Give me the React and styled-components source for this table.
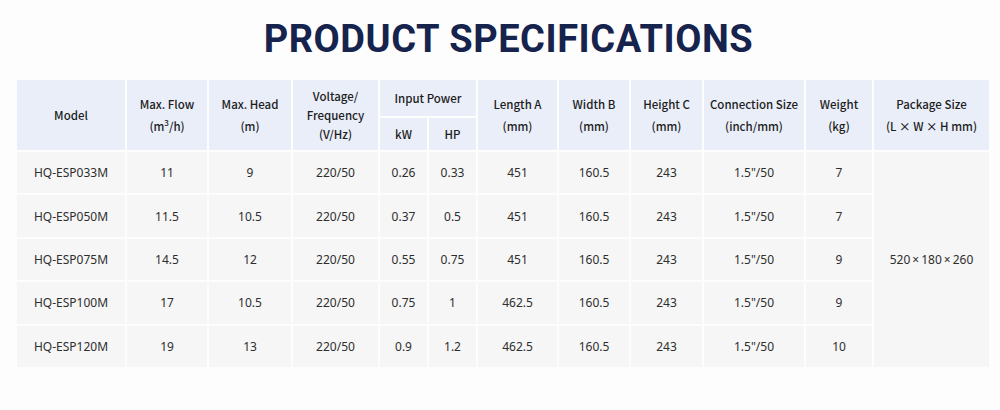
import styled, { createGlobalStyle } from "styled-components";

const GlobalStyle = createGlobalStyle`
  body {
    margin: 0;
    background: #fdfdfd;
    font-family: "Noto Sans", "Liberation Sans", sans-serif;
  }
`;

const Page = styled.div`
  width: 1000px;
  height: 410px;
  padding: 14px 11px 0 15px;
  box-sizing: border-box;
`;

const Title = styled.h1`
  margin: 3px 0 16px;
  height: 45px;
  text-align: center;
  font: 700 38px/45px "Roboto", "Liberation Sans", sans-serif;
  color: #15234d;
  letter-spacing: 0.55px;
  padding-left: 13px;
`;

const Table = styled.table`
  width: 974px;
  table-layout: fixed;
  border-collapse: collapse;
  font-size: 12px;
  color: #333;
`;

const Head = styled.th`
  background: #e9eef9;
  border: 2px solid #fdfdfd;
  font-family: "Noto Sans CJK SC", "Noto Sans", sans-serif;
  font-weight: 500;
  font-size: 11.5px;
  color: #1d1d1d;
  line-height: ${(p) => p.$lh || 22}px;
  padding: 0;
  height: ${(p) => p.$h || 32}px;
  vertical-align: middle;
`;

const Sup = styled.sup`
  font-size: 8px;
  line-height: 0;
`;

const Cell = styled.td`
  background: #f6f6f6;
  border: 2px solid #fdfdfd;
  text-align: center;
  padding: 0;
  height: 41.4px;
  color: #2e2e2e;
`;

const widths = [110, 82, 84, 87, 49, 49, 81, 72, 73, 102, 68, 117];

const rows = [
  ["HQ-ESP033M", "11", "9", "220/50", "0.26", "0.33", "451", "160.5", "243", "1.5\"/50", "7"],
  ["HQ-ESP050M", "11.5", "10.5", "220/50", "0.37", "0.5", "451", "160.5", "243", "1.5\"/50", "7"],
  ["HQ-ESP075M", "14.5", "12", "220/50", "0.55", "0.75", "451", "160.5", "243", "1.5\"/50", "9"],
  ["HQ-ESP100M", "17", "10.5", "220/50", "0.75", "1", "462.5", "160.5", "243", "1.5\"/50", "9"],
  ["HQ-ESP120M", "19", "13", "220/50", "0.9", "1.2", "462.5", "160.5", "243", "1.5\"/50", "10"],
];

export default function App() {
  return (
    <Page>
      <GlobalStyle />
      <Title>PRODUCT SPECIFICATIONS</Title>
      <Table>
        <colgroup>
          {widths.map((w, i) => (
            <col key={i} style={{ width: w }} />
          ))}
        </colgroup>
        <thead>
          <tr>
            <Head rowSpan={2}>Model</Head>
            <Head rowSpan={2}>Max. Flow<br />(m<Sup>3</Sup>/h)</Head>
            <Head rowSpan={2}>Max. Head<br />(m)</Head>
            <Head rowSpan={2} $lh={19}>Voltage/<br />Frequency<br />(V/Hz)</Head>
            <Head colSpan={2} $h={36}>Input Power</Head>
            <Head rowSpan={2}>Length A<br />(mm)</Head>
            <Head rowSpan={2}>Width B<br />(mm)</Head>
            <Head rowSpan={2}>Height C<br />(mm)</Head>
            <Head rowSpan={2}>Connection Size<br />(inch/mm)</Head>
            <Head rowSpan={2}>Weight<br />(kg)</Head>
            <Head rowSpan={2}>Package Size<br />(L × W × H mm)</Head>
          </tr>
          <tr>
            <Head>kW</Head>
            <Head>HP</Head>
          </tr>
        </thead>
        <tbody>
          {rows.map((r, i) => (
            <tr key={r[0]}>
              {r.map((v, j) => (
                <Cell key={j}>{v}</Cell>
              ))}
              {i === 0 && <Cell rowSpan={5}>520{"\u2009×\u2009"}180{"\u2009×\u2009"}260</Cell>}
            </tr>
          ))}
        </tbody>
      </Table>
    </Page>
  );
}
